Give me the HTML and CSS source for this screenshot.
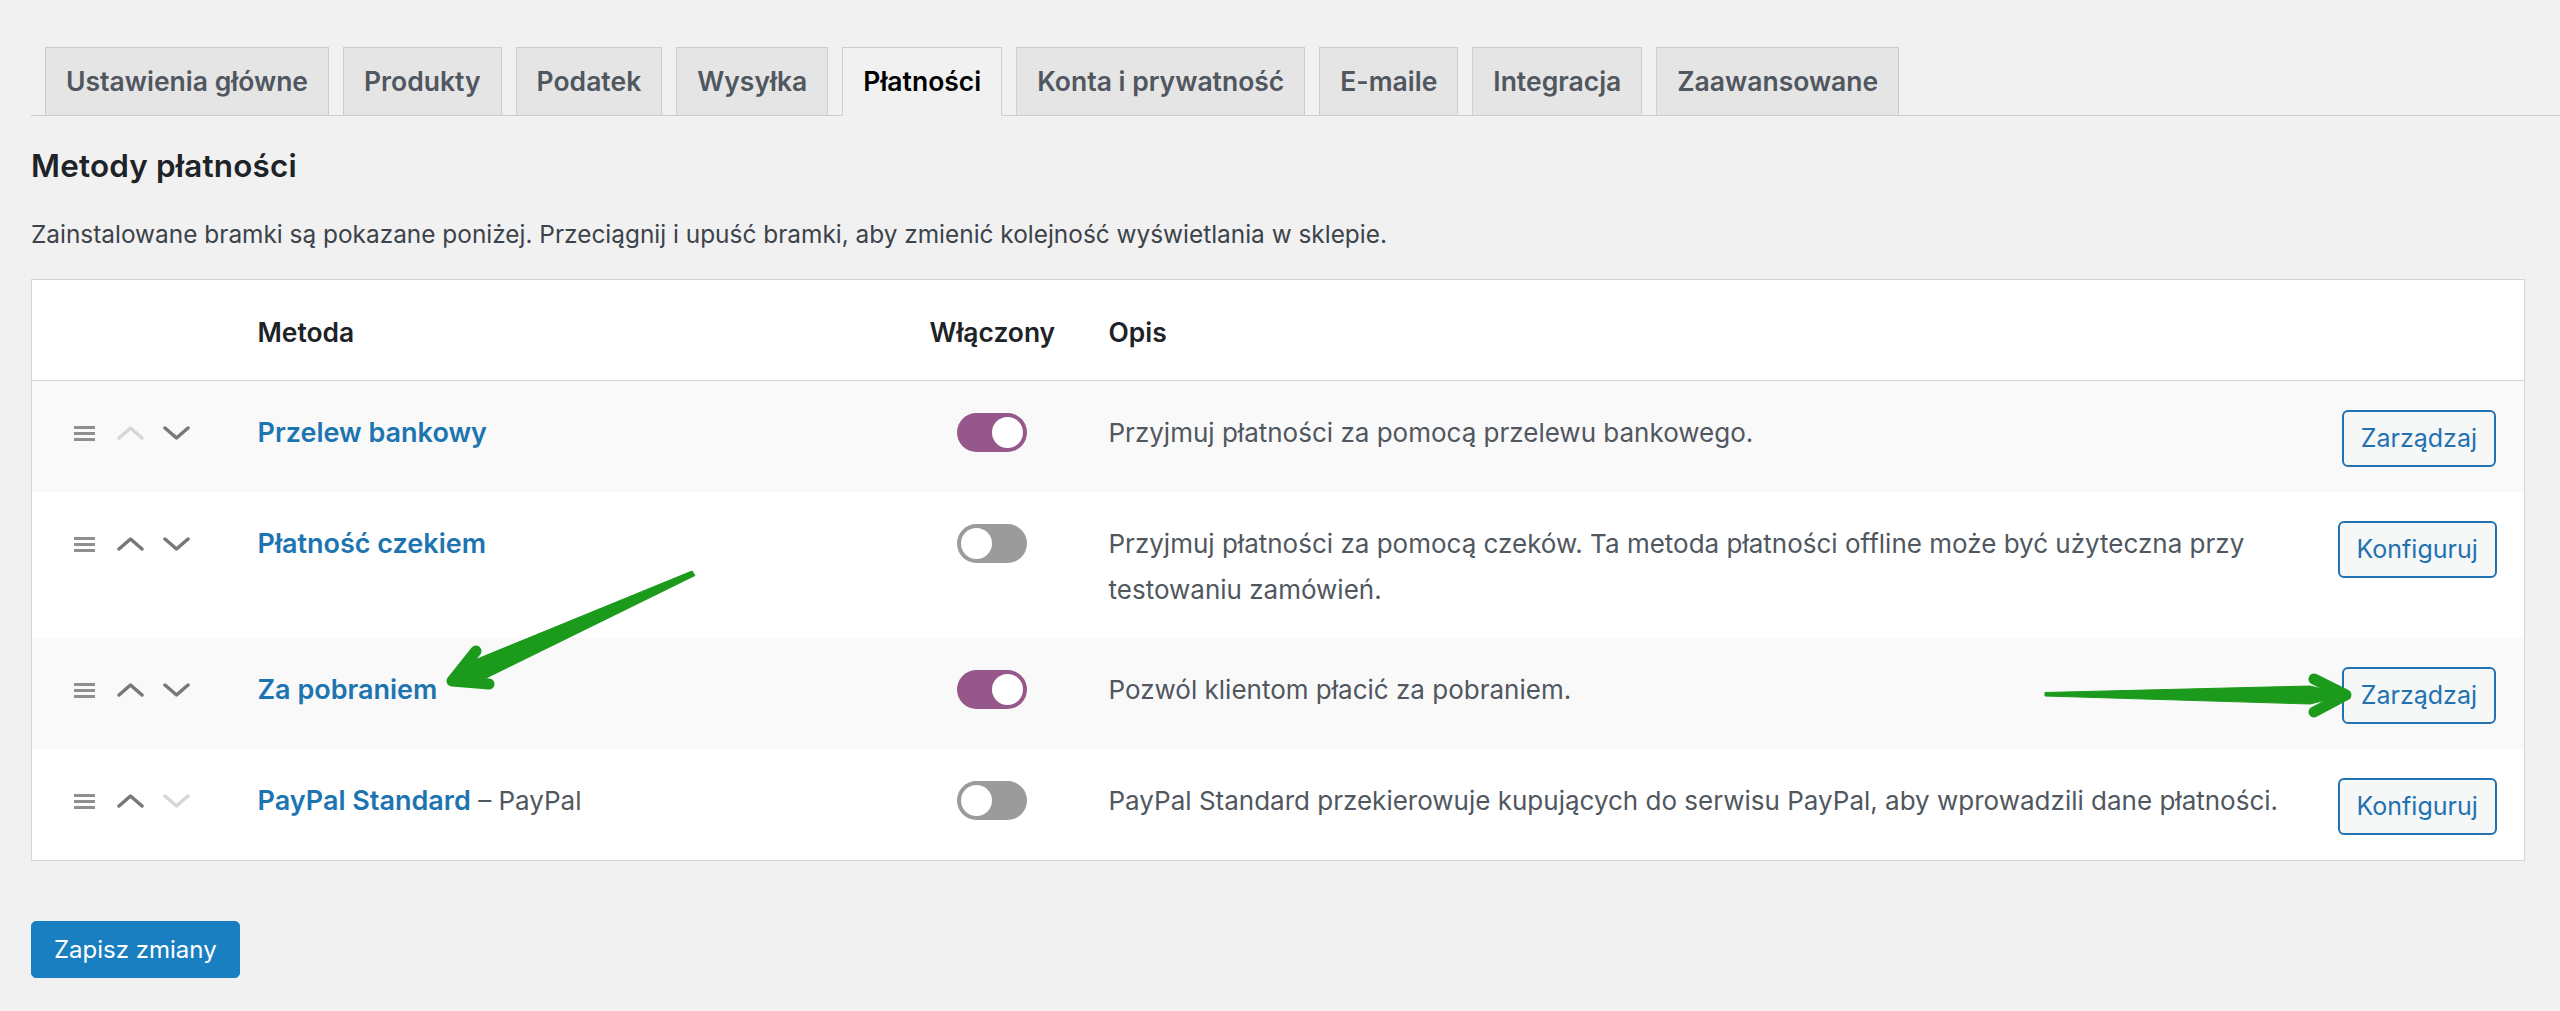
FILE: index.html
```html
<!DOCTYPE html>
<html lang="pl">
<head>
<meta charset="utf-8">
<title>Płatności</title>
<link rel="stylesheet" href="styles.css">
</head>
<body>
<div class="wrap">
  <nav class="tabs">
    <a class="tab">Ustawienia główne</a>
    <a class="tab">Produkty</a>
    <a class="tab">Podatek</a>
    <a class="tab">Wysyłka</a>
    <a class="tab active">Płatności</a>
    <a class="tab">Konta i prywatność</a>
    <a class="tab">E-maile</a>
    <a class="tab">Integracja</a>
    <a class="tab">Zaawansowane</a>
  </nav>

  <h2 class="title">Metody płatności</h2>
  <p class="intro">Zainstalowane bramki są pokazane poniżej. Przeciągnij i upuść bramki, aby zmienić kolejność wyświetlania w sklepie.</p>

  <div class="table-box">
    <table class="gateways">
      <thead>
        <tr>
          <th class="c-sort"></th>
          <th class="c-name">Metoda</th>
          <th class="c-status">Włączony</th>
          <th class="c-desc">Opis</th>
          <th class="c-action"></th>
        </tr>
      </thead>
      <tbody>
        <tr>
          <td class="c-sort">
            <div class="sort">
              <svg class="handle" width="21" height="15" viewBox="0 0 21 15"><rect y="0" width="21" height="3"/><rect y="6" width="21" height="3"/><rect y="12" width="21" height="3"/></svg>
              <svg class="chev disabled" width="27" height="14" viewBox="0 0 27 14"><polyline points="2,12 13.5,2 25,12"/></svg>
              <svg class="chev" width="27" height="14" viewBox="0 0 27 14"><polyline points="2,2 13.5,12 25,2"/></svg>
            </div>
          </td>
          <td class="c-name"><a class="method">Przelew bankowy</a></td>
          <td class="c-status"><span class="toggle on"></span></td>
          <td class="c-desc">Przyjmuj płatności za pomocą przelewu bankowego.</td>
          <td class="c-action"><a class="btn">Zarządzaj</a></td>
        </tr>
        <tr>
          <td class="c-sort">
            <div class="sort">
              <svg class="handle" width="21" height="15" viewBox="0 0 21 15"><rect y="0" width="21" height="3"/><rect y="6" width="21" height="3"/><rect y="12" width="21" height="3"/></svg>
              <svg class="chev" width="27" height="14" viewBox="0 0 27 14"><polyline points="2,12 13.5,2 25,12"/></svg>
              <svg class="chev" width="27" height="14" viewBox="0 0 27 14"><polyline points="2,2 13.5,12 25,2"/></svg>
            </div>
          </td>
          <td class="c-name"><a class="method">Płatność czekiem</a></td>
          <td class="c-status"><span class="toggle"></span></td>
          <td class="c-desc">Przyjmuj płatności za pomocą czeków. Ta metoda płatności offline może być użyteczna przy testowaniu zamówień.</td>
          <td class="c-action"><a class="btn">Konfiguruj</a></td>
        </tr>
        <tr>
          <td class="c-sort">
            <div class="sort">
              <svg class="handle" width="21" height="15" viewBox="0 0 21 15"><rect y="0" width="21" height="3"/><rect y="6" width="21" height="3"/><rect y="12" width="21" height="3"/></svg>
              <svg class="chev" width="27" height="14" viewBox="0 0 27 14"><polyline points="2,12 13.5,2 25,12"/></svg>
              <svg class="chev" width="27" height="14" viewBox="0 0 27 14"><polyline points="2,2 13.5,12 25,2"/></svg>
            </div>
          </td>
          <td class="c-name"><a class="method">Za pobraniem</a></td>
          <td class="c-status"><span class="toggle on"></span></td>
          <td class="c-desc">Pozwól klientom płacić za pobraniem.</td>
          <td class="c-action"><a class="btn">Zarządzaj</a></td>
        </tr>
        <tr>
          <td class="c-sort">
            <div class="sort">
              <svg class="handle" width="21" height="15" viewBox="0 0 21 15"><rect y="0" width="21" height="3"/><rect y="6" width="21" height="3"/><rect y="12" width="21" height="3"/></svg>
              <svg class="chev" width="27" height="14" viewBox="0 0 27 14"><polyline points="2,12 13.5,2 25,12"/></svg>
              <svg class="chev disabled" width="27" height="14" viewBox="0 0 27 14"><polyline points="2,2 13.5,12 25,2"/></svg>
            </div>
          </td>
          <td class="c-name"><a class="method">PayPal Standard</a><span class="sub"> – PayPal</span></td>
          <td class="c-status"><span class="toggle"></span></td>
          <td class="c-desc">PayPal Standard przekierowuje kupujących do serwisu PayPal, aby wprowadzili dane płatności.</td>
          <td class="c-action"><a class="btn">Konfiguruj</a></td>
        </tr>
      </tbody>
    </table>
  </div>

  <div class="submit">
    <button class="btn-primary" type="button">Zapisz zmiany</button>
  </div>
</div>

<svg class="annotations" width="2560" height="1011" viewBox="0 0 2560 1011" aria-hidden="true">
  <g class="arrow">
    <polygon points="692,571 695,575.5 470,686 451,682 460,666"/>
    <polyline points="476,651 452,681 489,684"/>
  </g>
  <g class="arrow">
    <polygon points="2045,692.5 2310,686 2346,695 2310,704 2045,696"/>
    <polyline points="2314,679 2346,695 2314,712"/>
  </g>
</svg>
</body>
</html>
```

FILE: styles.css
```css
* { box-sizing: border-box; }

html, body {
  margin: 0;
  padding: 0;
  background: #f1f1f1;
}

body {
  font-family: "Inter", "Noto Sans", sans-serif;
  color: #3c434a;
  position: relative;
  min-height: 1011px;
}

.wrap {
  padding: 47px 0 0 31px;
}

/* Tabs */
.tabs {
  display: flex;
  gap: 14px;
  padding-left: 14px;
  border-bottom: 1px solid #cdcdcd;
}

.tab {
  display: block;
  height: 69px;
  margin-bottom: -1px;
  padding: 0 20px;
  border: 1px solid #cdcdcd;
  background: #e5e5e5;
  color: #50575e;
  font-size: 26.5px;
  font-weight: 600;
  line-height: 67px;
  white-space: nowrap;
}

.tab.active {
  background: #f1f1f1;
  border-bottom-color: #f1f1f1;
  color: #000;
}

/* Heading + intro */
.title {
  margin: 30px 0 0;
  font-size: 31.4px;
  line-height: 40px;
  font-weight: 600;
  color: #1d2327;
  letter-spacing: 0.2px;
}

.intro {
  margin: 31px 0 0;
  font-size: 24.4px;
  line-height: 34px;
  color: #3c434a;
}

/* Table */
.table-box {
  margin: 28px 35px 0 0;
}

.gateways {
  width: 100%;
  table-layout: fixed;
  border-collapse: collapse;
  background: #fff;
  border: 1px solid #d3d5d8;
  font-size: 26px;
  line-height: 46px;
}

.gateways th,
.gateways td {
  padding: 29px 27px 25px;
  text-align: left;
  vertical-align: top;
}

.gateways thead th {
  font-weight: 600;
  font-size: 26.4px;
  color: #1d2327;
  border-bottom: 1px solid #d3d5d8;
}

.gateways tbody tr:nth-child(odd) {
  background: #f9f9f9;
}

.c-sort { width: 199px; }
.gateways .c-sort { padding-left: 42px; padding-right: 0; }
.c-name { width: 672px; }
.c-status { width: 179px; }
.gateways .c-status { text-align: center; }
.c-action { width: 207px; }
.gateways .c-desc { padding-right: 0; }
.gateways td.c-desc { color: #50575e; }
.gateways .c-action { text-align: right; padding-left: 20px; padding-right: 28px; }

.sort {
  display: flex;
  align-items: center;
  height: 46px;
}

.handle {
  fill: #8f8f8f;
  margin-right: 22px;
}

.chev {
  fill: none;
  stroke: #787878;
  stroke-width: 3.5;
  stroke-linecap: round;
  stroke-linejoin: round;
  margin-right: 19px;
}

.chev.disabled {
  stroke: #d6d6d6;
}

.method {
  color: #1c74b0;
  font-weight: 600;
  font-size: 27px;
}

.sub {
  color: #50575e;
}

/* Toggle */
.toggle {
  display: inline-block;
  position: relative;
  width: 70px;
  height: 39px;
  border-radius: 20px;
  background: #9b9b9b;
  vertical-align: middle;
  margin-top: -4px;
}

.toggle::after {
  content: "";
  position: absolute;
  top: 4px;
  left: 4px;
  width: 31px;
  height: 31px;
  border-radius: 50%;
  background: #fff;
}

.toggle.on {
  background: #96588a;
}

.toggle.on::after {
  left: auto;
  right: 4px;
}

/* Buttons */
.btn {
  display: inline-block;
  vertical-align: top;
  height: 57px;
  padding: 0 17px;
  border: 2px solid #2271b1;
  border-radius: 6px;
  background: #f6f7f7;
  color: #2271b1;
  font-size: 25px;
  line-height: 53px;
  white-space: nowrap;
}

.submit {
  margin-top: 60px;
}

.btn-primary {
  height: 57px;
  padding: 0 22px;
  border: 1px solid #1a7fc1;
  border-radius: 5px;
  background: #1a7fc1;
  color: #fff;
  font-family: inherit;
  font-size: 24px;
  line-height: 55px;
}

/* Annotation overlay */
.annotations {
  position: absolute;
  top: 0;
  left: 0;
  pointer-events: none;
}

.arrow polygon {
  fill: #1b9a1b;
  stroke: #1b9a1b;
  stroke-width: 1;
  stroke-linejoin: round;
}

.arrow polyline {
  fill: none;
  stroke: #1b9a1b;
  stroke-width: 11;
  stroke-linecap: round;
  stroke-linejoin: round;
}
```
